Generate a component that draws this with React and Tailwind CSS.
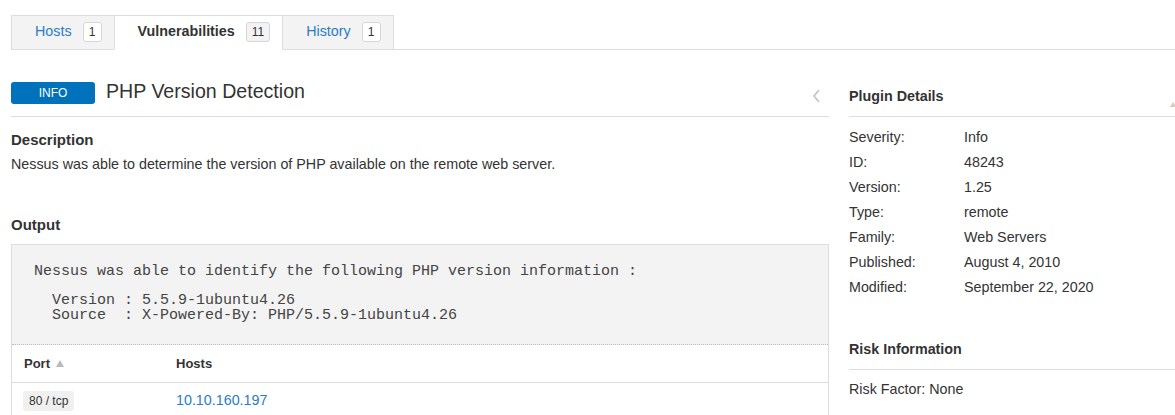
const details = [
  ["Severity:", "Info"],
  ["ID:", "48243"],
  ["Version:", "1.25"],
  ["Type:", "remote"],
  ["Family:", "Web Servers"],
  ["Published:", "August 4, 2010"],
  ["Modified:", "September 22, 2020"],
];

const output = `Nessus was able to identify the following PHP version information :

  Version : 5.5.9-1ubuntu4.26
  Source  : X-Powered-By: PHP/5.5.9-1ubuntu4.26`;

function Tab({ label, count, active }) {
  return (
    <div
      className={`-mb-px flex h-[35px] items-center border border-[#dddddd] pb-[2px] pl-[23px] pr-3 ${
        active ? "border-b-white bg-white font-bold text-[#333]" : "bg-[#f3f3f3] text-[#2a7cc6]"
      } [&+&]:-ml-px`}
    >
      <span className="text-[14.3px]">{label}</span>
      <span
        className={`ml-[11px] flex h-[20px] min-w-[19px] items-center justify-center rounded-[3px] border border-[#d6d6d6] px-[5px] text-[12px] font-normal text-[#333] ${
          active ? "bg-[#f3f3f3]" : "bg-white"
        }`}
      >
        {count}
      </span>
    </div>
  );
}

export default function App() {
  return (
    <div className="h-[415px] overflow-hidden bg-white pl-[11px] pt-[15px] font-['Liberation_Sans',Arial,sans-serif] text-[#333]">
      {/* TABS */}
      <div className="flex border-b border-[#dddddd]">
        <Tab label="Hosts" count="1" />
        <Tab label="Vulnerabilities" count="11" active />
        <Tab label="History" count="1" />
      </div>

      <div className="flex gap-[20px]">
        {/* LEFT COLUMN */}
        <div className="w-[818px] shrink-0">
          <div className="mt-[32px] flex items-center border-b border-[#dddddd] pb-[12px]">
            <span className="flex h-[22px] w-[84px] items-center justify-center rounded-[3px] bg-[#0071bb] text-[12px] text-white">
              INFO
            </span>
            <h1 className="ml-[11px] -translate-y-[2px] text-[19.6px] leading-[22px] text-[#333]">PHP Version Detection</h1>
            <svg className="ml-auto mr-[8px] mt-[6px]" width="9" height="14" viewBox="0 0 9 14">
              <path d="M7 1 L2 7 L7 13" fill="none" stroke="#b8c2cc" strokeWidth="1.5" />
            </svg>
          </div>

          <h2 className="mt-[13px] text-[15px] font-bold leading-[20px]">Description</h2>
          <p className="mt-[5px] text-[14.3px] leading-[18px]">
            Nessus was able to determine the version of PHP available on the remote web server.
          </p>

          <h2 className="mt-[42px] text-[15px] font-bold leading-[20px]">Output</h2>
          <div className="mt-[9px] border border-b-0 border-[#dddddd]">
            <pre className="border-b border-dotted border-[#bbbbbb] bg-[#f3f3f3] pb-[21px] pl-[22px] pt-[20px] font-['Liberation_Mono','Courier_New',monospace] text-[15px] leading-[14.5px] text-[#444]">
              {output}
            </pre>
            <div className="flex h-[38px] items-center border-b border-[#dddddd] text-[13px] font-bold">
              <div className="flex w-[164px] items-center pl-[12px]">
                Port
                <svg className="ml-[6px]" width="8" height="7" viewBox="0 0 8 7">
                  <path d="M4 0 L8 7 L0 7 Z" fill="#bbbbbb" />
                </svg>
              </div>
              <div>Hosts</div>
            </div>
            <div className="flex h-[34px] items-center pt-[1px] text-[14.3px]">
              <div className="w-[164px] pl-[11px]">
                <span className="rounded-[3px] bg-[#f0f0f0] px-[6px] py-[3px] text-[12px]">80 / tcp</span>
              </div>
              <div className="text-[#2a7cc6]">10.10.160.197</div>
            </div>
          </div>
        </div>

        {/* RIGHT COLUMN */}
        <div className="relative w-[340px] shrink-0">
          <div className="mt-[36px] flex h-[31px] items-start border-b border-[#dddddd]">
            <h3 className="text-[14.3px] font-bold leading-[20px]">Plugin Details</h3>
            <svg className="absolute right-[13px] top-[52px]" width="6" height="5" viewBox="0 0 6 5">
              <path d="M3 0 L6 5 L0 5 Z" fill="#d9c9bb" />
            </svg>
          </div>
          <div className="mt-[8px] flex flex-col text-[14.3px]">
            {details.map(([k, v]) => (
              <div key={k} className="flex h-[25px] items-center">
                <span className="w-[115px]">{k}</span>
                <span>{v}</span>
              </div>
            ))}
          </div>
          <div className="mt-[39px] flex h-[31px] items-start border-b border-[#dddddd]">
            <h3 className="text-[14.3px] font-bold leading-[20px]">Risk Information</h3>
          </div>
          <p className="mt-[9px] text-[14.3px] leading-[20px]">Risk Factor: None</p>
        </div>
      </div>
    </div>
  );
}
